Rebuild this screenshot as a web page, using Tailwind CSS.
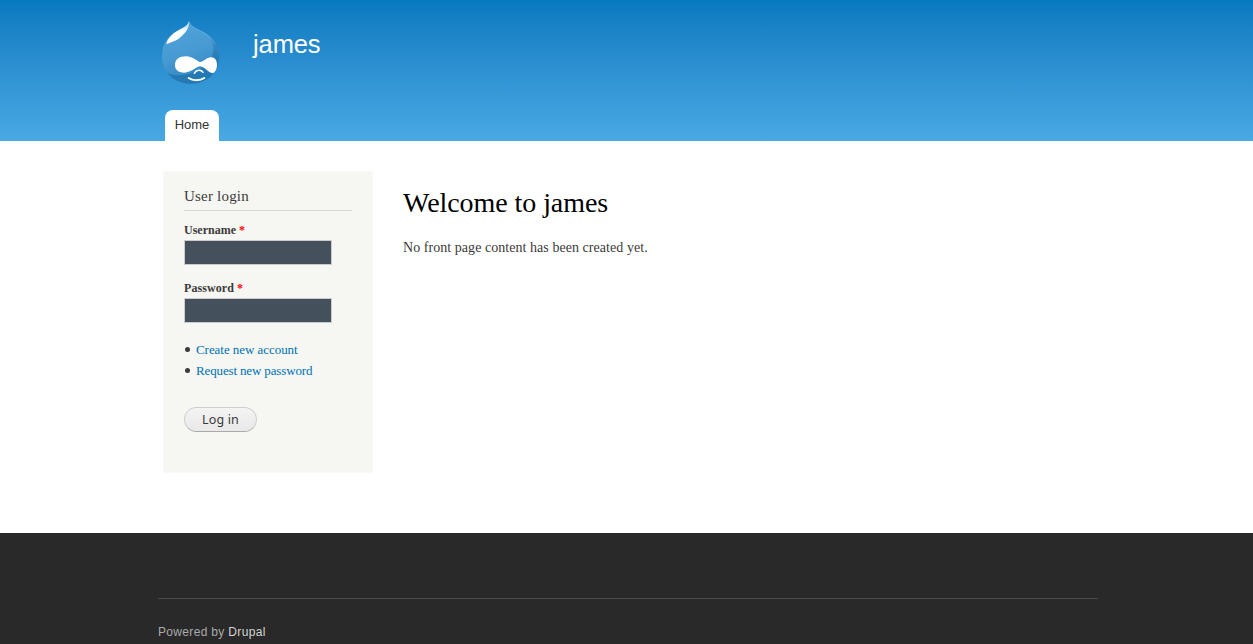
<!DOCTYPE html>
<html lang="en">
<head>
<meta charset="utf-8">
<title>Welcome to james | james</title>
<script src="https://cdn.jsdelivr.net/npm/@tailwindcss/browser@4"></script>
</head>
<body class="h-[644px] overflow-hidden bg-white font-['Liberation_Serif',serif] text-sm text-[#3b3b3b]">
<header class="h-[141px] bg-linear-to-b from-[#0779bf] to-[#48a9e4] pl-[150px]">
  <div class="flex h-[110px] pt-2.5">
    <a href="#" class="block size-20 shrink-0" aria-label="Home">
      <svg viewBox="0 0 240 240" class="size-20">
        <defs>
          <linearGradient id="body" x1=".3" y1="0" x2=".6" y2="1">
            <stop offset="0" stop-color="#4fa4da"/><stop offset=".5" stop-color="#479ad2"/><stop offset="1" stop-color="#2f86c0"/>
          </linearGradient>
          <linearGradient id="shade" x1="0" y1="0" x2="0" y2="1">
            <stop offset="0" stop-color="#1d74b0" stop-opacity=".25"/><stop offset=".5" stop-color="#1b6faa" stop-opacity=".65"/><stop offset="1" stop-color="#1b70ab" stop-opacity=".65"/>
          </linearGradient>
          <linearGradient id="shine" x1=".95" y1="0" x2=".2" y2="1">
            <stop offset="0" stop-color="#a9d5f0"/><stop offset=".4" stop-color="#fff"/><stop offset="1" stop-color="#fff"/>
          </linearGradient>
        </defs>
        <path d="M117 32C121 48 137 55 158 65C188 80 208 104 208 137C208 187 172 221 122 221C72 221 36 187 36 138C36 104 50 84 74 67C95 53 112 50 117 32Z" fill="url(#body)"/>
        <path d="M176 76C196 91 208 110 208 137C208 187 172 221 122 221C92 221 67 209 52 189C84 202 120 195 150 177C187 156 204 116 176 76Z" fill="url(#shade)"/>
        <path d="M117 34C121 49 137 56 158 66C175 75 187 87 194 101" fill="none" stroke="#8ac5ea" stroke-width="3" opacity=".4"/>
        <path d="M49 103C53 82 70 69 87 60C102 52 112 49 117 34C120 55 104 72 89 84C76 94 58 98 49 103Z" fill="url(#shine)"/>
        <path d="M108 139C130 139 142 156 151 156C160 156 169 143 184 142C194 142 201 151 201 164C201 178 194 189 187 189C176 189 164 170 151 169C138 169 125 188 103 188C84 188 75 179 75 165C75 149 87 139 108 139Z" fill="#fff"/>
        <path d="M133 190C139 179 153 178 159 187" fill="none" stroke="#fff" stroke-width="4.5" stroke-linecap="round"/>
        <path d="M116 204C128 213 150 213 163 204" fill="none" stroke="#fff" stroke-width="6" stroke-linecap="round"/>
      </svg>
    </a>
    <a href="#" class="ml-[23px] mt-[18px] font-['Liberation_Sans',sans-serif] text-[25.5px] leading-8 tracking-[-0.1px] text-[#fffeff]">james</a>
  </div>
  <nav class="flex pl-[15px]">
    <a href="#" class="h-[31px] w-[54px] rounded-t-lg bg-white text-center font-['Liberation_Sans',sans-serif] text-[13px] leading-[30px] text-[#333]">Home</a>
  </nav>
</header>
<div class="flex h-[392px] pt-[30px] pl-[163px]">
  <aside class="h-[302px] w-[210px] border border-[#f9f9f9] bg-[#f6f6f2] px-5 pt-3.5">
    <h2 class="h-[25px] w-[168px] border-b border-[#d6d6d6] text-[15px] leading-5 tracking-[0.2px]">User login</h2>
    <form>
      <label class="mt-3 block text-xs leading-[15px] font-bold">Username <span class="text-[#ff0000]">*</span></label>
      <input type="text" class="mt-0.5 block h-[25px] w-[148px] border border-[#cccccc] bg-[#44505c]">
      <label class="mt-4 block text-xs leading-[15px] font-bold tracking-[0.08px]">Password <span class="text-[#ff0000]">*</span></label>
      <input type="password" class="mt-0.5 block h-[25px] w-[148px] border border-[#cccccc] bg-[#44505c]">
      <ul class="mt-4 text-[13px] leading-[21px] text-[#0071b3]">
        <li class="flex items-center gap-1.5 pl-px"><span class="size-[5px] rounded-full bg-[#3b3b3b]"></span><a href="#" class="tracking-[-0.05px]">Create new account</a></li>
        <li class="flex items-center gap-1.5 pl-px"><span class="size-[5px] rounded-full bg-[#3b3b3b]"></span><a href="#" class="tracking-[-0.14px]">Request new password</a></li>
      </ul>
      <button type="button" class="mt-[26px] block h-[25px] w-[73px] rounded-full border border-[#cecece] border-b-[#aaaaaa] bg-linear-to-b from-[#f4f4f4] to-[#e8e8e8] font-['Noto_Sans',sans-serif] text-[12.5px] leading-[23px] tracking-[0.15px] text-[#3a3a3a]">Log in</button>
    </form>
  </aside>
  <main class="pt-[15px] pl-[30px]">
    <h1 class="text-[28px] leading-[34px] tracking-[-0.06px] text-black">Welcome to james</h1>
    <p class="mt-[18px] text-sm leading-5 tracking-[0.05px]">No front page content has been created yet.</p>
  </main>
</div>
<footer class="h-[111px] bg-[#292929] pt-[65px] pl-[158px] font-['Liberation_Sans',sans-serif] text-xs tracking-[0.33px] text-[#a9a9a9]">
  <div class="w-[940px] border-t border-[#4b4b4b] pt-[25px] leading-4">Powered by <a href="#" class="text-[#d4d4d4]">Drupal</a></div>
</footer>
</body>
</html>
